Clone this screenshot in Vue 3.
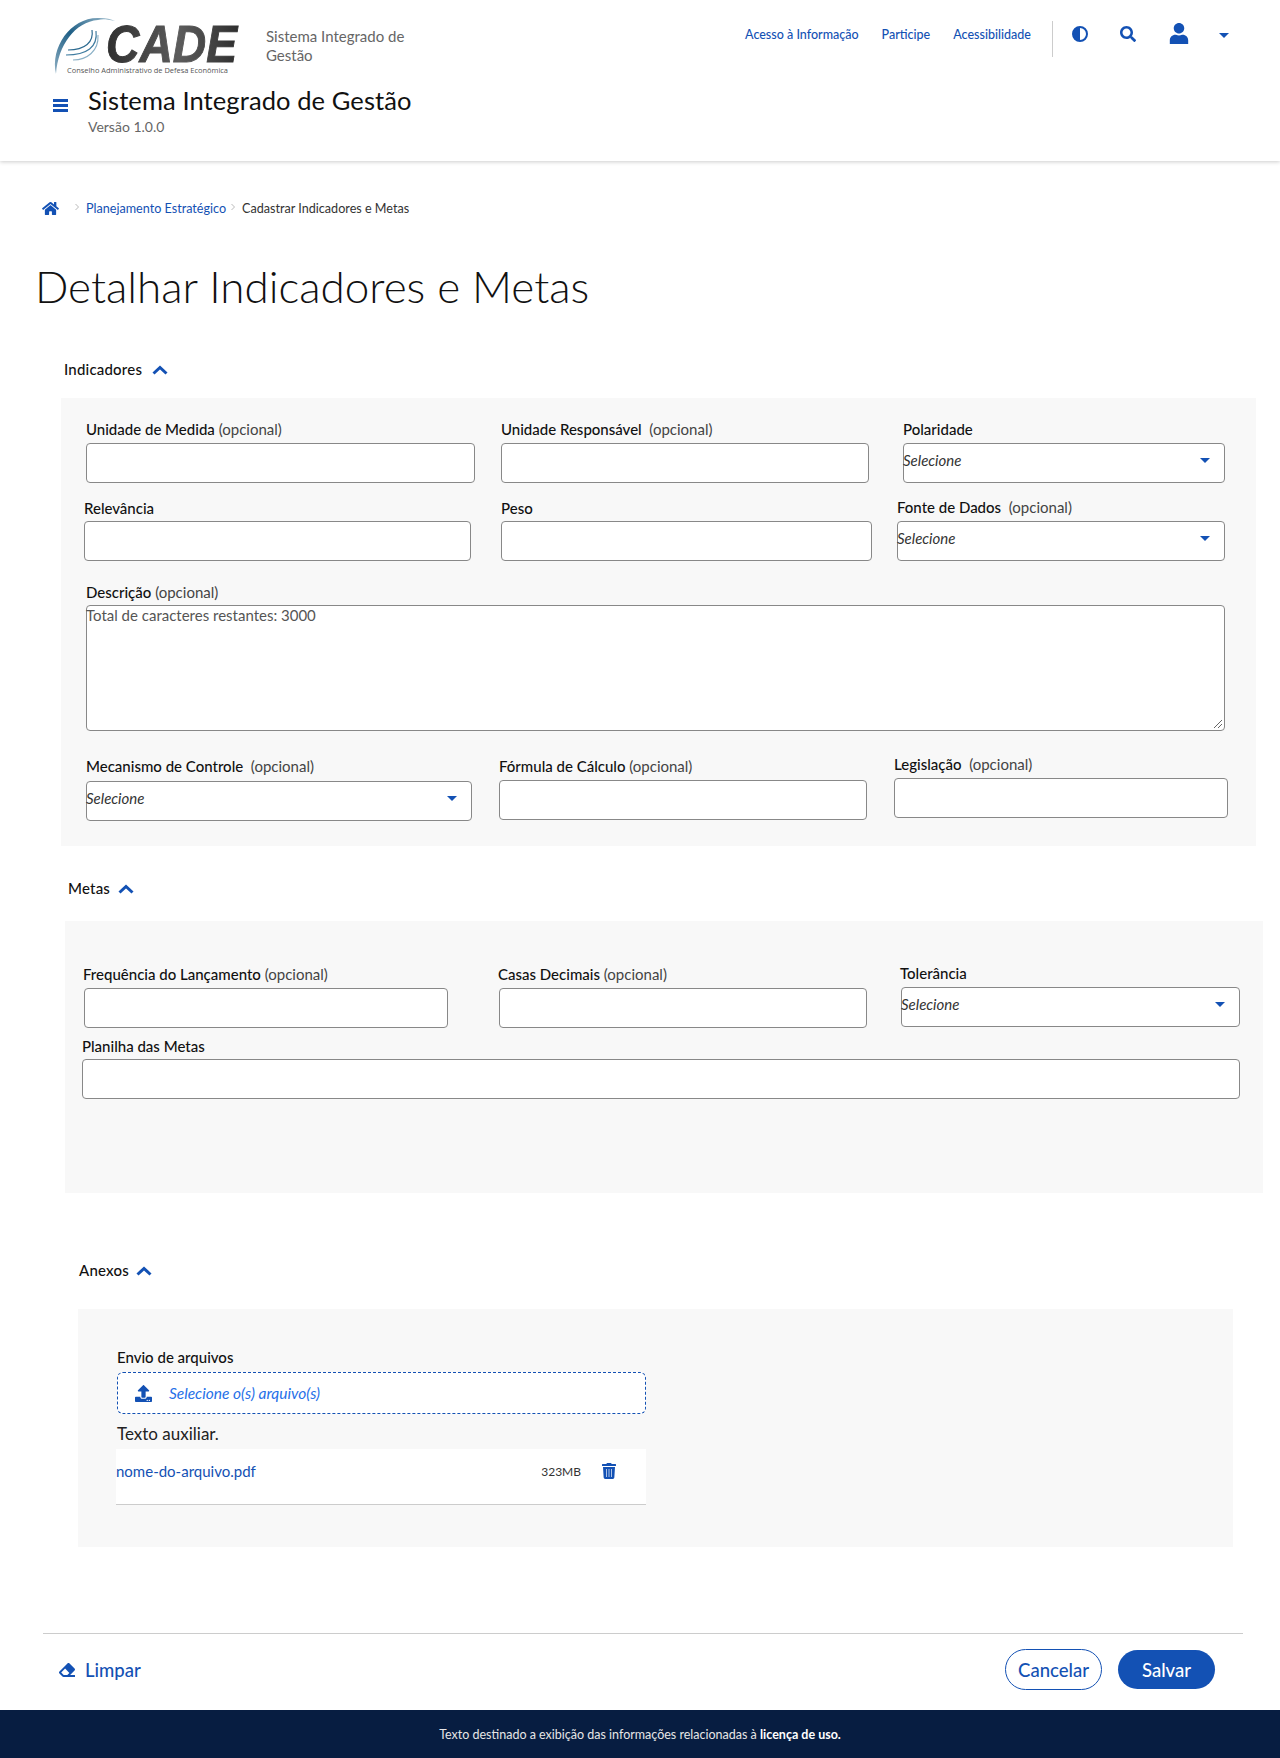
<script setup>
const navLinks = ["Acesso à Informação", "Participe", "Acessibilidade"];
</script>

<template>
  <div class="page">
    <header class="header">
      <div class="header-top">
        <svg class="logo" viewBox="0 0 185 60" role="img" aria-label="CADE">
          <defs>
            <linearGradient id="arc" x1="0" y1="1" x2="1" y2="0">
              <stop offset="0" stop-color="#8fb0c4" />
              <stop offset="0.5" stop-color="#1f5f86" />
              <stop offset="1" stop-color="#9dbccd" />
            </linearGradient>
            <linearGradient id="word" x1="0" y1="0" x2="1" y2="0">
              <stop offset="0" stop-color="#2f2f2f" />
              <stop offset="0.55" stop-color="#5c5c5c" />
              <stop offset="1" stop-color="#2f2f2f" />
            </linearGradient>
          </defs>
          <path d="M3 57C-3 30 18 0 46 1c7 0 12 1 16 3-9-2-13-2-17-1C22 5 5 28 3 57z" fill="url(#arc)" />
          <path d="M39 13c2 12-7 20-24 20" fill="none" stroke="#2c6a90" stroke-width="1.2" />
          <path d="M43 14c2 16-9 24-30 24" fill="none" stroke="#3f7ca0" stroke-width="1.2" />
          <path d="M45 18c1 16-11 25-25 25" fill="none" stroke="#6d9cb8" stroke-width="1.1" opacity="0.8" />
          <text x="53" y="45" class="logo-word" textLength="131" lengthAdjust="spacingAndGlyphs" fill="url(#word)" stroke="url(#word)">CADE</text>
          <text x="14" y="56" class="logo-sub" textLength="161" lengthAdjust="spacingAndGlyphs">Conselho Administrativo de Defesa Econômica</text>
        </svg>
        <div class="brand">Sistema Integrado de Gestão</div>
        <nav class="nav">
          <a v-for="link in navLinks" :key="link">{{ link }}</a>
        </nav>
        <div class="nav-divider"></div>
        <div class="nav-icons">
          <svg class="ic-contrast" viewBox="0 0 16 16">
            <circle cx="8" cy="8" r="7" fill="none" stroke="#1351b4" stroke-width="2" />
            <path d="M8 1a7 7 0 0 0 0 14z" fill="#1351b4" />
          </svg>
          <svg class="ic-search" viewBox="0 0 512 512">
            <path fill="#1351b4" d="M505 442.7L405.3 343c-4.5-4.5-10.6-7-17-7H372c27.6-35.3 44-79.7 44-128C416 93.1 322.9 0 208 0S0 93.1 0 208s93.1 208 208 208c48.3 0 92.7-16.4 128-44v16.3c0 6.4 2.5 12.5 7 17l99.7 99.7c9.4 9.4 24.6 9.4 33.9 0l28.3-28.3c9.4-9.4 9.4-24.6.1-34zM208 336c-70.7 0-128-57.2-128-128 0-70.7 57.2-128 128-128 70.7 0 128 57.2 128 128 0 70.7-57.2 128-128 128z" />
          </svg>
          <svg class="ic-user" viewBox="0 0 448 512">
            <path fill="#1351b4" d="M224 256c70.7 0 128-57.3 128-128S294.7 0 224 0 96 57.3 96 128s57.3 128 128 128zm89.6 32h-16.7c-22.2 10.2-46.9 16-72.9 16s-50.6-5.8-72.9-16h-16.7C60.2 288 0 348.2 0 422.4V512h448v-89.6c0-74.2-60.2-134.4-134.4-134.4z" />
          </svg>
          <span class="caret nav-caret"></span>
        </div>
      </div>
      <div class="header-title">
        <div class="burger"><span></span><span></span><span></span></div>
        <div>
          <div class="app-title">Sistema Integrado de Gestão</div>
          <div class="app-version">Versão 1.0.0</div>
        </div>
      </div>
    </header>

    <main>
      <div class="breadcrumb">
        <svg class="ic-home" viewBox="0 0 576 512">
          <path fill="#1351b4" d="M280.37 148.26L96 300.11V464a16 16 0 0 0 16 16l112.06-.29a16 16 0 0 0 15.92-16V368a16 16 0 0 1 16-16h64a16 16 0 0 1 16 16v95.64a16 16 0 0 0 16 16.05L464 480a16 16 0 0 0 16-16V300L295.67 148.26a12.19 12.19 0 0 0-15.3 0zM571.6 251.47L488 182.56V44.05a12 12 0 0 0-12-12h-56a12 12 0 0 0-12 12v72.61L318.47 43a48 48 0 0 0-61 0L4.34 251.47a12 12 0 0 0-1.6 16.9l25.5 31A12 12 0 0 0 45.15 301l235.22-193.74a12.19 12.19 0 0 1 15.3 0L530.9 301a12 12 0 0 0 16.9-1.6l25.5-31a12 12 0 0 0-1.7-16.93z" />
        </svg>
        <svg class="crumb-sep first" viewBox="0 0 6 8"><path d="M1.500 1l3 3-3 3" /></svg>
        <a>Planejamento Estratégico</a>
        <svg class="crumb-sep" viewBox="0 0 6 8"><path d="M1.500 1l3 3-3 3" /></svg>
        <span class="crumb-current">Cadastrar Indicadores e Metas</span>
      </div>

      <h1>Detalhar Indicadores e Metas</h1>

      <!-- Indicadores -->
      <div class="section-head head-ind">
        Indicadores
        <svg class="chevron" viewBox="0 0 16 10"><path d="M1.500 8.500L8 2.500l6.500 6" /></svg>
      </div>
      <section class="panel panel-ind">
        <div class="row row-a">
          <div class="field">
            <label><b>Unidade de Medida</b> (opcional)</label>
            <div class="input"></div>
          </div>
          <div class="field">
            <label><b>Unidade Responsável</b>&nbsp; (opcional)</label>
            <div class="input"></div>
          </div>
          <div class="field">
            <label><b>Polaridade</b></label>
            <div class="input select"><i>Selecione</i><span class="caret"></span></div>
          </div>
        </div>
        <div class="row row-b">
          <div class="field">
            <label><b>Relevância</b></label>
            <div class="input"></div>
          </div>
          <div class="field">
            <label><b>Peso</b></label>
            <div class="input"></div>
          </div>
          <div class="field">
            <label><b>Fonte de Dados</b>&nbsp; (opcional)</label>
            <div class="input select"><i>Selecione</i><span class="caret"></span></div>
          </div>
        </div>
        <div class="field desc">
          <label><b>Descrição</b> (opcional)</label>
          <div class="input textarea">
            Total de caracteres restantes: 3000
            <svg class="grip" viewBox="0 0 10 10"><path d="M9 1L1 9M9 5L5 9" /></svg>
          </div>
        </div>
        <div class="row row-c">
          <div class="field">
            <label><b>Mecanismo de Controle</b>&nbsp; (opcional)</label>
            <div class="input select"><i>Selecione</i><span class="caret"></span></div>
          </div>
          <div class="field">
            <label><b>Fórmula de Cálculo</b> (opcional)</label>
            <div class="input"></div>
          </div>
          <div class="field">
            <label><b>Legislação</b>&nbsp; (opcional)</label>
            <div class="input"></div>
          </div>
        </div>
      </section>

      <!-- Metas -->
      <div class="section-head head-metas">
        Metas
        <svg class="chevron" viewBox="0 0 16 10"><path d="M1.500 8.500L8 2.500l6.500 6" /></svg>
      </div>
      <section class="panel panel-metas">
        <div class="row row-d">
          <div class="field">
            <label><b>Frequência do Lançamento</b> (opcional)</label>
            <div class="input"></div>
          </div>
          <div class="field">
            <label><b>Casas Decimais</b> (opcional)</label>
            <div class="input"></div>
          </div>
          <div class="field">
            <label><b>Tolerância</b></label>
            <div class="input select"><i>Selecione</i><span class="caret"></span></div>
          </div>
        </div>
        <div class="field planilha">
          <label><b>Planilha das Metas</b></label>
          <div class="input"></div>
        </div>
      </section>

      <!-- Anexos -->
      <div class="section-head head-anexos">
        Anexos
        <svg class="chevron" viewBox="0 0 16 10"><path d="M1.500 8.500L8 2.500l6.500 6" /></svg>
      </div>
      <section class="panel panel-anexos">
        <div class="upload">
          <label><b>Envio de arquivos</b></label>
          <div class="dropzone">
            <svg class="ic-upload" viewBox="0 0 512 512">
              <path fill="#1351b4" d="M296 384h-80c-13.300 0-24-10.700-24-24V192h-87.700c-17.800 0-26.700-21.500-14.100-34.100L242.300 5.700c7.500-7.500 19.800-7.500 27.300 0l152.200 152.200c12.600 12.600 3.700 34.100-14.100 34.100H320v168c0 13.300-10.700 24-24 24zm216-8v112c0 13.300-10.700 24-24 24H24c-13.300 0-24-10.700-24-24V376c0-13.300 10.700-24 24-24h136v8c0 30.900 25.100 56 56 56h80c30.900 0 56-25.100 56-56v-8h136c13.300 0 24 10.700 24 24zm-124 88c0-11-9-20-20-20s-20 9-20 20 9 20 20 20 20-9 20-20zm64 0c0-11-9-20-20-20s-20 9-20 20 9 20 20 20 20-9 20-20z" />
            </svg>
            <i>Selecione o(s) arquivo(s)</i>
          </div>
          <div class="helper">Texto auxiliar.</div>
          <div class="file-row">
            <a class="file-name">nome-do-arquivo.pdf</a>
            <span class="file-size">323MB</span>
            <svg class="ic-trash" viewBox="0 0 448 512">
              <path fill="#1351b4" d="M432 32H312l-9.4-18.7A24 24 0 0 0 281.1 0H166.8a23.72 23.72 0 0 0-21.4 13.3L136 32H16A16 16 0 0 0 0 48v32a16 16 0 0 0 16 16h416a16 16 0 0 0 16-16V48a16 16 0 0 0-16-16zM53.2 467a48 48 0 0 0 47.9 45h245.8a48 48 0 0 0 47.9-45L416 128H32z" />
              <path fill="#dfe8f6" d="M136 190h24v260h-24zM212 190h24v260h-24zM288 190h24v260h-24z" />
            </svg>
          </div>
        </div>
      </section>

      <div class="divider"></div>
      <div class="actions">
        <a class="clear">
          <svg class="ic-eraser" viewBox="0 0 512 512">
            <path fill="#1351b4" d="M497.941 273.941c18.745-18.745 18.745-49.137 0-67.882l-160-160c-18.745-18.745-49.136-18.746-67.883 0l-256 256c-18.745 18.745-18.745 49.137 0 67.882l96 96A48.004 48.004 0 0 0 144 480h356c6.627 0 12-5.373 12-12v-40c0-6.627-5.373-12-12-12H355.883l142.058-142.059zm-302.627-62.627l137.373 137.373L265.373 416H150.628l-80-80 124.686-124.686z" />
          </svg>
          Limpar
        </a>
        <button class="btn btn-outline">Cancelar</button>
        <button class="btn btn-primary">Salvar</button>
      </div>
    </main>

    <footer class="footer">
      Texto destinado a exibição das informações relacionadas à&nbsp;<b>licença de uso.</b>
    </footer>
  </div>
</template>

<style scoped>
.page {
  width: 1280px;
  height: 1758px;
  background: #fff;
  font-family: "Lato", "Open Sans", sans-serif;
  color: #111;
  display: flex;
  flex-direction: column;
  overflow: hidden;
}

.header {
  height: 161px;
  box-sizing: border-box;
  padding: 17px 0 0 53px;
  box-shadow: 0 1px 4px rgba(0, 0, 0, 0.2);
  flex-shrink: 0;
}

.header-top {
  display: flex;
  align-items: flex-start;
  height: 60px;
}

.logo {
  width: 185px;
  height: 60px;
  flex-shrink: 0;
  overflow: visible;
}

.logo-word {
  font-family: "Liberation Sans", sans-serif;
  font-weight: 700;
  font-style: italic;
  font-size: 52px;
  stroke-width: 1;
}

.logo-sub {
  font-family: "Open Sans", sans-serif;
  font-size: 7.5px;
  fill: #555;
}

.brand {
  width: 160px;
  margin: 10px 0 0 28px;
  font-size: 15px;
  line-height: 19px;
  color: #666;
}

.nav {
  display: flex;
  gap: 23px;
  margin: 9px 0 0 auto;
  font-size: 12.5px;
  font-weight: 500;
  line-height: 18px;
  color: #1351b4;
}

.nav-divider {
  width: 1px;
  height: 36px;
  background: #ccc;
  margin: 4px 0 0 21px;
}

.nav-icons {
  display: flex;
  align-items: flex-start;
  width: 227px;
  margin-top: 6px;
}

.ic-contrast {
  width: 16px;
  height: 16px;
  margin: 3px 0 0 19px;
}

.ic-search {
  width: 16px;
  height: 16px;
  margin: 3px 0 0 32px;
}

.ic-user {
  width: 20px;
  height: 21px;
  margin: 0 0 0 33px;
}

.nav-caret {
  margin: 10px 0 0 30px;
}

.caret {
  display: block;
  width: 0;
  height: 0;
  border-left: 5px solid transparent;
  border-right: 5px solid transparent;
  border-top: 5px solid #1351b4;
  flex-shrink: 0;
}

.header-title {
  display: flex;
  align-items: flex-start;
  margin-top: 8px;
}

.burger {
  width: 15px;
  margin: 14px 20px 0 0;
}

.burger span {
  display: block;
  height: 2.5px;
  background: #1351b4;
  margin-bottom: 2.5px;
}

.app-title {
  font-size: 25.5px;
  line-height: 30px;
  color: #111;
  letter-spacing: 0.1px;
}

.app-version {
  font-size: 14px;
  line-height: 20px;
  margin-top: 2px;
  color: #666;
}

.breadcrumb {
  display: flex;
  align-items: center;
  height: 20px;
  margin: 37px 0 0 42px;
  font-size: 12.6px;
  color: #333;
}

.ic-home {
  width: 17px;
  height: 15px;
}

.crumb-sep {
  width: 6px;
  height: 8px;
  margin: -2px 6px 0 4px;
}

.crumb-sep path {
  fill: none;
  stroke: #bbb;
  stroke-width: 1;
}

.crumb-sep.first {
  margin-left: 15px;
  margin-right: 6px;
}

.breadcrumb a {
  color: #1351b4;
}

h1 {
  margin: 38px 0 0 35px;
  font-size: 44px;
  line-height: 60px;
  font-weight: 300;
  color: #111;
}

.section-head {
  display: flex;
  align-items: center;
  box-sizing: border-box;
  height: 20px;
  padding-bottom: 2px;
  font-size: 15px;
  letter-spacing: 0.2px;
  font-weight: 500;
}

.chevron {
  width: 16px;
  height: 10px;
  margin: 2px 0 0 10px;
}

.chevron path {
  fill: none;
  stroke: #1351b4;
  stroke-width: 3;
}

.head-ind {
  margin: 44px 0 18px 64px;
}

.head-metas {
  margin: 33px 0 22px 68px;
}

.head-metas .chevron {
  margin-left: 8px;
}

.head-anexos {
  margin: 68px 0 28px 79px;
}

.head-anexos .chevron {
  margin-left: 7px;
}

.panel {
  background: #f8f8f8;
  box-sizing: border-box;
  flex-shrink: 0;
}

.panel-ind {
  margin-left: 61px;
  width: 1195px;
  height: 448px;
  padding-top: 23px;
}

.panel-metas {
  margin-left: 65px;
  width: 1198px;
  height: 272px;
  padding-top: 44px;
}

.panel-anexos {
  margin-left: 78px;
  width: 1155px;
  height: 238px;
  padding-top: 40px;
}

.row {
  display: flex;
  align-items: flex-start;
}

.field label,
.upload label {
  display: block;
  height: 18px;
  line-height: 16px;
  font-size: 15px;
  color: #444;
  white-space: nowrap;
}

label b {
  font-weight: 500;
  color: #111;
}

.input {
  height: 40px;
  box-sizing: border-box;
  margin-top: 3px;
  border: 1px solid #888;
  border-radius: 4px;
  background: #fff;
}

.select {
  display: flex;
  align-items: center;
  justify-content: space-between;
  padding: 0 14px 6px 0;
  font-size: 15px;
  color: #333;
}

.select i {
  margin-left: -1px;
}

/* campos com larguras proprias de cada linha */
.row-a {
  margin-left: 25px;
}

.row-a .field:nth-child(1) {
  width: 389px;
}

.row-a .field:nth-child(2) {
  width: 368px;
  margin-left: 26px;
}

.row-a .field:nth-child(3) {
  width: 322px;
  margin-left: 34px;
}

.row-a .input {
  margin-top: 4px;
}

.row-b {
  margin: 17px 0 0 23px;
}

.row-b .field:nth-child(1) {
  width: 387px;
}

.row-b .field:nth-child(2) {
  width: 371px;
  margin-left: 30px;
}

.row-b .field:nth-child(3) {
  width: 328px;
  margin: -1px 0 0 25px;
}

.row-b .field:nth-child(3) .input {
  margin-top: 4px;
}

.desc {
  width: 1139px;
  margin: 23px 0 0 25px;
}

.textarea {
  height: 126px;
  position: relative;
  font-size: 15px;
  line-height: 19px;
  color: #555;
  text-indent: -1px;
}

.grip {
  position: absolute;
  right: 1px;
  bottom: 1px;
  width: 10px;
  height: 10px;
}

.grip path {
  fill: none;
  stroke: #666;
  stroke-width: 1;
}

.row-c {
  margin: 25px 0 0 25px;
}

.row-c .field:nth-child(1) {
  width: 386px;
  margin-top: 2px;
}

.row-c .field:nth-child(1) .input {
  margin-top: 5px;
}

.row-c .field:nth-child(2) {
  width: 368px;
  margin: 2px 0 0 27px;
}

.row-c .field:nth-child(2) .input {
  margin-top: 4px;
}

.row-c .field:nth-child(3) {
  width: 334px;
  margin-left: 27px;
}

.row-c .field:nth-child(3) .input {
  margin-top: 4px;
}

.row-d {
  margin-left: 19px;
}

.row-d label {
  margin-left: -1px;
}

.row-d .input {
  margin-top: 4px;
}

.row-d .field:nth-child(1) {
  width: 364px;
  margin-top: 1px;
}

.row-d .field:nth-child(2) {
  width: 368px;
  margin: 1px 0 0 51px;
}

.row-d .field:nth-child(3) {
  width: 339px;
  margin-left: 34px;
}

.planilha {
  width: 1158px;
  margin: 10px 0 0 17px;
}

.upload {
  width: 529px;
  margin-left: 39px;
}

.dropzone {
  display: flex;
  align-items: center;
  height: 42px;
  box-sizing: border-box;
  margin-top: 5px;
  padding-left: 17px;
  border: 1px dashed #1351b4;
  border-radius: 6px;
  background: #fff;
  font-size: 15.5px;
  color: #2670e8;
}

.ic-upload {
  width: 17px;
  height: 17px;
  margin-right: 17px;
}

.helper {
  margin-top: 10px;
  font-size: 17px;
  line-height: 20px;
  color: #222;
}

.file-row {
  display: flex;
  align-items: flex-start;
  height: 56px;
  box-sizing: border-box;
  margin: 5px 0 0 -1px;
  padding-top: 12px;
  border-bottom: 1px solid #ccc;
  background: #fff;
}

.file-name {
  font-size: 15px;
  line-height: 20px;
  color: #1351b4;
}

.file-size {
  margin: 1px 21px 0 auto;
  font-size: 12px;
  line-height: 20px;
  color: #333;
}

.ic-trash {
  width: 14px;
  height: 16px;
  margin: 2px 30px 0 0;
}

.divider {
  height: 1px;
  width: 1200px;
  margin: 86px 0 0 43px;
  background: #ccc;
}

.actions {
  display: flex;
  align-items: center;
  height: 41px;
  margin: 15px 65px 20px 58px;
}

.clear {
  display: flex;
  align-items: center;
  margin-right: auto;
  font-size: 18.5px;
  font-weight: 500;
  color: #1351b4;
}

.ic-eraser {
  width: 18px;
  height: 16px;
  margin-right: 9px;
}

.btn {
  width: 97px;
  box-sizing: border-box;
  border-radius: 21px;
  font-family: inherit;
  font-size: 18.5px;
  font-weight: 500;
}

.btn-outline {
  height: 41px;
  border: 1px solid #1351b4;
  background: #fff;
  color: #1351b4;
  margin-right: 16px;
}

.btn-primary {
  height: 39px;
  border: none;
  background: #1351b4;
  color: #fff;
}

.footer {
  flex: 1;
  display: flex;
  align-items: center;
  justify-content: center;
  padding-top: 1px;
  background: #071d41;
  color: #e6e6e6;
  font-size: 12.5px;
}

.footer b {
  color: #fff;
}
</style>
